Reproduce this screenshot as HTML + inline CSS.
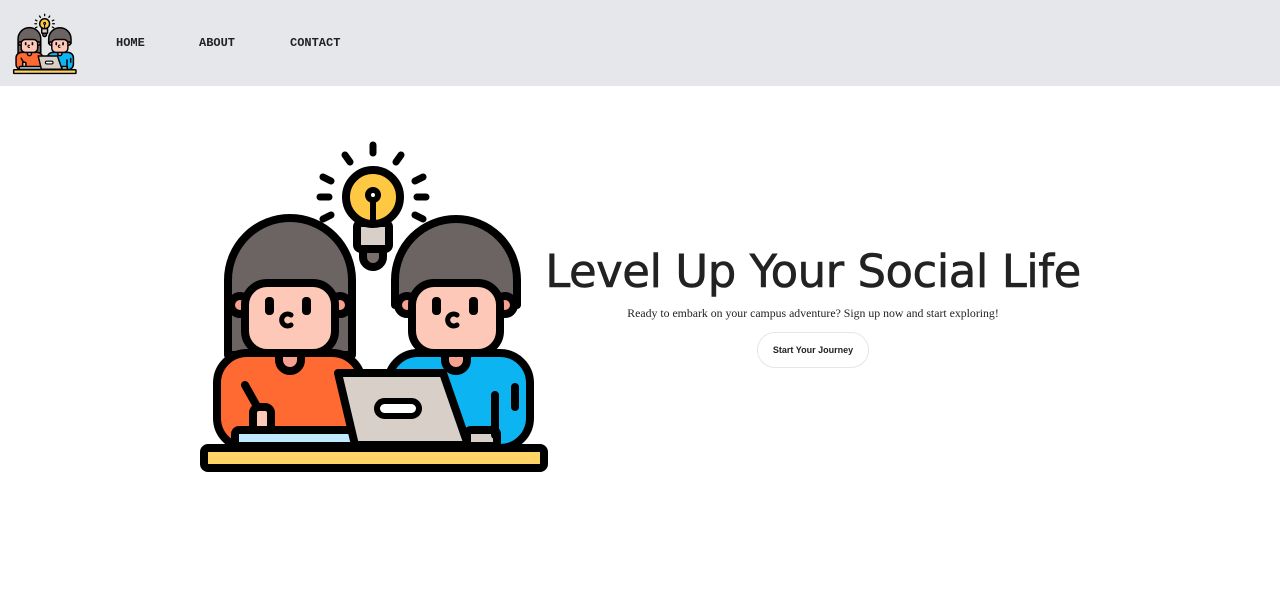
<!DOCTYPE html>
<html><head><meta charset="utf-8"><style>
body{margin:0;width:1280px;height:613px;background:#fff;font-family:"Liberation Sans",sans-serif;overflow:hidden;position:relative}
nav{position:absolute;left:0;top:0;width:1280px;height:86px;background:#e5e7eb}
nav a{position:absolute;top:36px;font-family:"Liberation Mono",monospace;font-weight:bold;font-size:12px;color:#222;text-decoration:none}
h1{position:absolute;left:513px;width:600px;top:245px;margin:0;text-align:center;font-family:"DejaVu Sans",sans-serif;font-weight:normal;font-size:45px;color:#222;letter-spacing:-0.5px;-webkit-text-stroke:0.6px #222}
p{position:absolute;left:513px;width:600px;top:306px;margin:0;text-align:center;font-family:"Liberation Serif",serif;font-size:11.8px;color:#222}
.btn{position:absolute;left:757px;top:332px;width:112px;height:36px;border:1px solid #e6e6e6;border-radius:18px;box-sizing:border-box;font-size:9px;font-weight:bold;color:#222;text-align:center;line-height:35px}
</style></head><body>
<svg width="0" height="0" style="position:absolute"><defs>
<g id="ill" stroke="#000" stroke-width="8" stroke-linecap="round" stroke-linejoin="round">
<g fill="none" stroke-width="7"><path d="M178 10v8M150 20l5 7M206 20l-5 7M128 42l8 4M228 42l-8 4M125 62h9M222 62h9M128 84l8-4M228 84l-8-4"/></g>
<rect x="162" y="88" width="32" height="26" rx="4" fill="#d8cfc9"/>
<path d="M168 114h20v8a10 10 0 0 1-20 0z" fill="#7a6e6a"/>
<circle cx="178" cy="62" r="27" fill="#ffc842"/>
<circle cx="178" cy="60" r="5" fill="#fff" stroke-width="6"/>
<path d="M178 66v22" fill="none" stroke-width="6"/>
<path d="M33 220V145a62 62 0 0 1 124 0v75z" fill="#6c6463"/>
<path d="M200 170V145a61 61 0 0 1 122 0v25z" fill="#6c6463"/>
<rect x="22" y="218" width="145" height="95" rx="30" fill="#ff6a32"/>
<rect x="193" y="218" width="142" height="95" rx="30" fill="#0cb4f2"/>
<path d="M84 205v20a11 11 0 0 0 22 0v-20z" fill="#f6a08f"/>
<path d="M250 205v20a11 11 0 0 0 22 0v-20z" fill="#f6a08f"/>
<circle cx="45" cy="170" r="9" fill="#f6a08f"/><circle cx="145" cy="170" r="9" fill="#f6a08f"/>
<circle cx="212" cy="170" r="9" fill="#f6a08f"/><circle cx="310" cy="170" r="9" fill="#f6a08f"/>
<rect x="50" y="148" width="90" height="70" rx="22" fill="#fdc8b8"/>
<rect x="217" y="148" width="88" height="70" rx="22" fill="#fdc8b8"/>
<g fill="#000" stroke="none"><rect x="70" y="162" width="9" height="18" rx="4"/><rect x="107" y="162" width="9" height="18" rx="4"/><rect x="237" y="162" width="9" height="18" rx="4"/><rect x="274" y="162" width="9" height="18" rx="4"/></g>
<path d="M96 180a6 6 0 1 0 0 10M262 180a6 6 0 1 0 0 10" fill="none" stroke-width="5"/>
<path d="M50 250l14 25" fill="none"/>
<rect x="58" y="272" width="18" height="30" rx="6" fill="#fdc8b8"/>
<rect x="40" y="295" width="120" height="16" rx="4" fill="#bfe9ff"/>
<path d="M143 238h105l25 72H160z" fill="#d8cfc9"/>
<rect x="182" y="266" width="42" height="15" rx="7.5" fill="#fff" stroke-width="6"/>
<rect x="272" y="295" width="30" height="16" rx="4" fill="#d8cfc9"/>
<path d="M300 260v40M320 252v20" fill="none"/>
<rect x="9" y="313" width="340" height="20" rx="4" fill="#ffd365"/>
</g></defs></svg>
<nav>
<svg style="position:absolute;left:12px;top:12px" width="66" height="64" viewBox="0 0 360 345"><use href="#ill"/></svg>
<a style="left:116px">HOME</a><a style="left:199px">ABOUT</a><a style="left:290px">CONTACT</a>
</nav>
<svg style="position:absolute;left:195px;top:135px" width="360" height="345" viewBox="0 0 360 345"><use href="#ill"/></svg>
<h1>Level Up Your Social Life</h1>
<p>Ready to embark on your campus adventure? Sign up now and start exploring!</p>
<div class="btn">Start Your Journey</div>
</body></html>
